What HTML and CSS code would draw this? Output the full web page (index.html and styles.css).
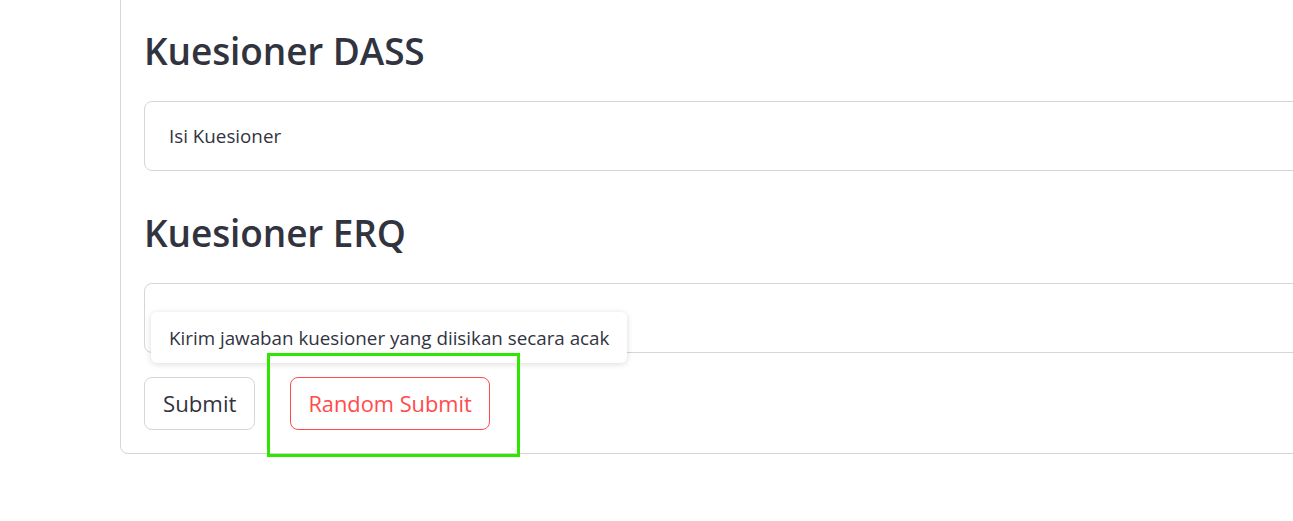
FILE: index.html
```html
<!DOCTYPE html>
<html lang="id">
<head>
<meta charset="utf-8">
<link rel="stylesheet" href="styles.css">
<title>Kuesioner</title>
</head>
<body>
<div class="page">
  <div class="card">
    <h2 class="heading">Kuesioner DASS</h2>
    <div class="expander"><span>Isi Kuesioner</span></div>
    <h2 class="heading">Kuesioner ERQ</h2>
    <div class="expander"><span>Isi Kuesioner</span></div>
    <div class="actions">
      <button class="btn">Submit</button>
      <button class="btn btn-red">Random Submit</button>
    </div>
    <div class="tooltip">Kirim jawaban kuesioner yang diisikan secara acak</div>
    <div class="highlight"></div>
  </div>
</div>
</body>
</html>
```

FILE: styles.css
```css
html, body {
  margin: 0;
  padding: 0;
  background: #ffffff;
  overflow: hidden;
}
body {
  font-family: "Open Sans", "Noto Sans", sans-serif;
  color: #31333f;
  width: 1293px;
  height: 521px;
}
.page {
  padding-left: 120px;
}
.card {
  position: relative;
  margin-top: -12px;
  width: 1300px;
  border: 1px solid #d6d6d9;
  border-radius: 8px;
  padding: 0 0 23px 23px;
}
.heading {
  margin: 0;
  padding: 30px 0 18px;
  font-size: 37px;
  line-height: 64px;
  font-weight: 600;
  letter-spacing: -0.1px;
  color: #31333f;
}
.expander {
  height: 68px;
  border: 1px solid #d6d6d9;
  border-radius: 8px;
  display: flex;
  align-items: center;
  padding-left: 24px;
  font-size: 18.8px;
}
.actions {
  display: flex;
  gap: 35px;
  margin-top: 24px;
}
.btn {
  height: 53px;
  padding: 0 18px;
  border: 1px solid #d6d6d9;
  border-radius: 8px;
  background: #ffffff;
  font-family: inherit;
  font-size: 22.2px;
  color: #31333f;
}
.btn-red {
  border-color: #ff4b4b;
  color: #ff4b4b;
  padding: 0 17px;
  font-size: 21.8px;
}
.tooltip {
  position: absolute;
  left: 30px;
  top: 323px;
  height: 51px;
  padding: 0 18px;
  display: flex;
  align-items: center;
  background: #ffffff;
  border-radius: 6px;
  box-shadow: 0 1px 6px rgba(0, 0, 0, 0.15);
  font-size: 18.8px;
  white-space: nowrap;
}
.highlight {
  position: absolute;
  left: 146px;
  top: 364px;
  width: 247px;
  height: 98px;
  border: 3px solid #2ee600;
}
```
